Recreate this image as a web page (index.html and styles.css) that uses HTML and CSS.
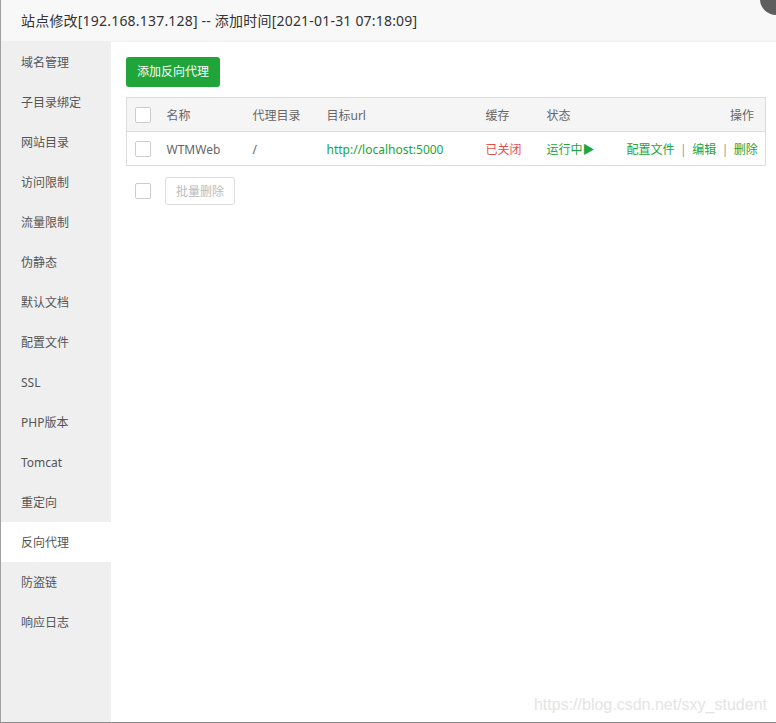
FILE: index.html
```html
<!DOCTYPE html>
<html lang="zh">
<head>
<meta charset="utf-8">
<title>站点修改</title>
<link rel="stylesheet" href="styles.css">
</head>
<body>
<div class="layer">
  <div class="layer-title">站点修改[192.168.137.128] -- 添加时间[2021-01-31 07:18:09]</div>
  <span class="layer-close"></span>
  <div class="layer-body">
    <ul class="side-menu">
      <li>域名管理</li>
      <li>子目录绑定</li>
      <li>网站目录</li>
      <li>访问限制</li>
      <li>流量限制</li>
      <li>伪静态</li>
      <li>默认文档</li>
      <li>配置文件</li>
      <li>SSL</li>
      <li>PHP版本</li>
      <li>Tomcat</li>
      <li>重定向</li>
      <li class="active">反向代理</li>
      <li>防盗链</li>
      <li>响应日志</li>
    </ul>
    <div class="content">
      <button class="btn-green">添加反向代理</button>
      <table class="proxy-table">
        <colgroup>
          <col class="c-check"><col class="c-name"><col class="c-dir"><col class="c-url"><col class="c-cache"><col class="c-state"><col>
        </colgroup>
        <thead>
          <tr>
            <th><span class="checkbox"></span></th>
            <th>名称</th>
            <th>代理目录</th>
            <th>目标url</th>
            <th>缓存</th>
            <th>状态</th>
            <th class="right">操作</th>
          </tr>
        </thead>
        <tbody>
          <tr>
            <td><span class="checkbox"></span></td>
            <td>WTMWeb</td>
            <td>/</td>
            <td class="green">http://localhost:5000</td>
            <td class="red">已关闭</td>
            <td class="green">运行中▶</td>
            <td class="right green">配置文件<span class="sep">|</span>编辑<span class="sep">|</span>删除</td>
          </tr>
        </tbody>
      </table>
      <div class="batch">
        <span class="checkbox"></span>
        <button class="btn-default">批量删除</button>
      </div>
    </div>
  </div>
  <div class="watermark">https://blog.csdn.net/sxy_student</div>
</div>
</body>
</html>
```

FILE: styles.css
```css
* { box-sizing: border-box; }
html, body { margin: 0; padding: 0; background: #fff; }
body {
  font-family: "Noto Sans", "Noto Sans CJK SC", sans-serif;
  color: #555;
}
.layer {
  position: relative;
  width: 776px;
  height: 723px;
  border-left: 1px solid #a0a0a0;
  border-bottom: 1px solid #8c8c8c;
  display: flex;
  flex-direction: column;
  overflow: hidden;
}
.layer-title {
  height: 42px;
  line-height: 41px;
  padding-left: 20px;
  background: #f8f8f8;
  border-bottom: 1px solid #eee;
  font-size: 14px;
  letter-spacing: 0.2px;
  color: #333;
  flex: none;
}
.layer-close {
  position: absolute;
  right: -16px;
  top: -17px;
  width: 32px;
  height: 32px;
  border-radius: 50%;
  background: #5e5e5e;
}
.layer-body {
  flex: 1;
  display: flex;
}
.side-menu {
  list-style: none;
  margin: 0;
  padding: 0;
  width: 110px;
  background: #efefef;
  flex: none;
}
.side-menu li {
  height: 40px;
  line-height: 42px;
  padding-left: 20px;
  font-size: 12px;
  color: #555;
}
.side-menu li.active { background: #fff; }
.content {
  flex: 1;
  padding: 15px 10px 15px 15px;
}
.btn-green {
  display: block;
  height: 30px;
  padding: 0 11px;
  border: none;
  border-radius: 3px;
  background: #20a53a;
  color: #fff;
  font-family: inherit;
  font-size: 12px;
  line-height: 30px;
  cursor: pointer;
}
.proxy-table {
  margin-top: 10px;
  width: 640px;
  border-collapse: collapse;
  table-layout: fixed;
  border: 1px solid #ddd;
  font-size: 12px;
}
.c-check { width: 32px; }
.c-name { width: 86px; }
.c-dir { width: 74px; }
.c-url { width: 159px; }
.c-cache { width: 61px; }
.c-state { width: 80px; }
.proxy-table th,
.proxy-table td {
  height: 34px;
  padding: 1px 8px 0;
  text-align: left;
  font-weight: normal;
  color: #666;
  border-bottom: 1px solid #ddd;
  white-space: nowrap;
  vertical-align: middle;
}
.proxy-table thead th { background: #f5f5f5; }
.proxy-table .right { text-align: right; padding-right: 11px; }
.proxy-table .green { color: #20a53a; }
.proxy-table .red { color: #e54d4d; }
.sep { color: #999; margin: 0 5.5px; }
.checkbox {
  display: block;
  width: 16px;
  height: 16px;
  border: 1px solid #ccc;
  border-radius: 2px;
  background: #fff;
}
.batch {
  margin-top: 11px;
  display: flex;
  align-items: center;
  padding-left: 9px;
  gap: 14px;
}
.btn-default {
  height: 28px;
  padding: 0 10px;
  border: 1px solid #ddd;
  border-radius: 3px;
  background: #fff;
  color: #bbb;
  font-family: inherit;
  font-size: 12px;
}
.watermark {
  position: absolute;
  right: 9px;
  bottom: 8px;
  font-family: "Liberation Sans", Arial, sans-serif;
  font-size: 16px;
  color: #e4e4e4;
}
```
